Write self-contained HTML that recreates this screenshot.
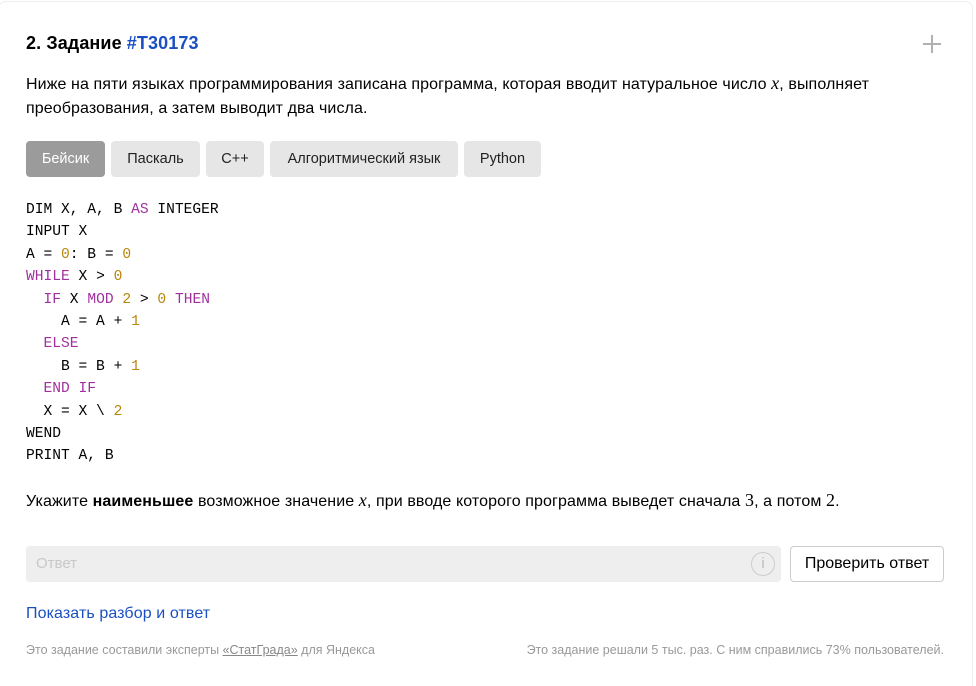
<!DOCTYPE html>
<html><head><meta charset="utf-8"><style>
*{margin:0;padding:0;box-sizing:border-box}
html,body{width:976px;height:686px;background:#fff;overflow:hidden}
body{font-family:"Liberation Sans",sans-serif;color:#000;position:relative}
.card{position:absolute;left:-2px;top:1px;width:975px;height:700px;border:1px solid #eee;border-radius:8px;background:#fff}
h1{position:absolute;left:26px;top:33px;font-size:18px;font-weight:bold;letter-spacing:0.1px}
h1 span{color:#1a4fc4}
.plus{position:absolute;left:923px;top:35px;width:18px;height:18px}
.plus:before{content:"";position:absolute;left:8px;top:0;width:2px;height:18px;background:#b0b0b0}
.plus:after{content:"";position:absolute;left:0;top:8px;width:18px;height:2px;background:#b0b0b0}
.p{position:absolute;left:26px;top:71px;font-size:16px;line-height:24px;width:920px;letter-spacing:0.1px}
i.m{font-family:"Liberation Serif",serif;font-size:18px}
.tab{position:absolute;top:141px;height:36px;border-radius:4px;background:#e6e6e6;font-size:14.5px;line-height:36px;text-align:center;color:#222}
pre{position:absolute;left:26px;top:199px;font-family:"Liberation Mono",monospace;font-size:14.6px;line-height:22.4px;color:#000}
.k{color:#a0309e}.n{color:#b8860b}
.q{position:absolute;left:26px;top:488px;font-size:16px;line-height:24px;letter-spacing:0.1px}
.s{font-family:"Liberation Serif",serif;font-size:18px}
.inp{position:absolute;left:26px;top:546px;width:755px;height:36px;background:#eee;border-radius:4px;color:#c8c8c8;font-size:15px;line-height:36px;padding-left:10px}
.info{position:absolute;left:751px;top:552px;width:24px;height:24px;border:1.5px solid #ccc;border-radius:50%;color:#bbb;font-size:15px;text-align:center;line-height:22px}
.btn{position:absolute;left:790px;top:546px;width:154px;height:36px;border:1px solid #ccc;border-radius:4px;font-size:16px;line-height:34px;text-align:center;color:#000}
.link{position:absolute;left:26px;top:605px;font-size:16px;color:#1a4fc4;letter-spacing:0.1px}
.f{position:absolute;top:643px;font-size:12.5px;color:#999}
.f u{color:#888}
</style></head><body>
<div class="card"></div>
<h1>2. Задание <span>#T30173</span></h1>
<div class="plus"></div>
<div class="p">Ниже на пяти языках программирования записана программа, которая вводит натуральное число <i class="m">x</i>, выполняет преобразования, а затем выводит два числа.</div>
<div class="tab" style="left:26px;width:79px;background:#9b9b9b;color:#fff">Бейсик</div>
<div class="tab" style="left:111px;width:89px">Паскаль</div>
<div class="tab" style="left:206px;width:58px">C++</div>
<div class="tab" style="left:270px;width:188px">Алгоритмический язык</div>
<div class="tab" style="left:464px;width:77px">Python</div>
<pre>DIM X, A, B <span class="k">AS</span> INTEGER
INPUT X
A = <span class="n">0</span>: B = <span class="n">0</span>
<span class="k">WHILE</span> X &gt; <span class="n">0</span>
  <span class="k">IF</span> X <span class="k">MOD</span> <span class="n">2</span> &gt; <span class="n">0</span> <span class="k">THEN</span>
    A = A + <span class="n">1</span>
  <span class="k">ELSE</span>
    B = B + <span class="n">1</span>
  <span class="k">END IF</span>
  X = X \ <span class="n">2</span>
WEND
PRINT A, B</pre>
<div class="q">Укажите <b>наименьшее</b> возможное значение <i class="m">x</i>, при вводе которого программа выведет сначала <span class="s">3</span>, а потом <span class="s">2</span>.</div>
<div class="inp">Ответ</div>
<div class="info">i</div>
<div class="btn">Проверить ответ</div>
<div class="link">Показать разбор и ответ</div>
<div class="f" style="left:26px">Это задание составили эксперты <u>«СтатГрада»</u> для Яндекса</div>
<div class="f" style="right:32px">Это задание решали 5 тыс. раз. С ним справились 73% пользователей.</div>
</body></html>
